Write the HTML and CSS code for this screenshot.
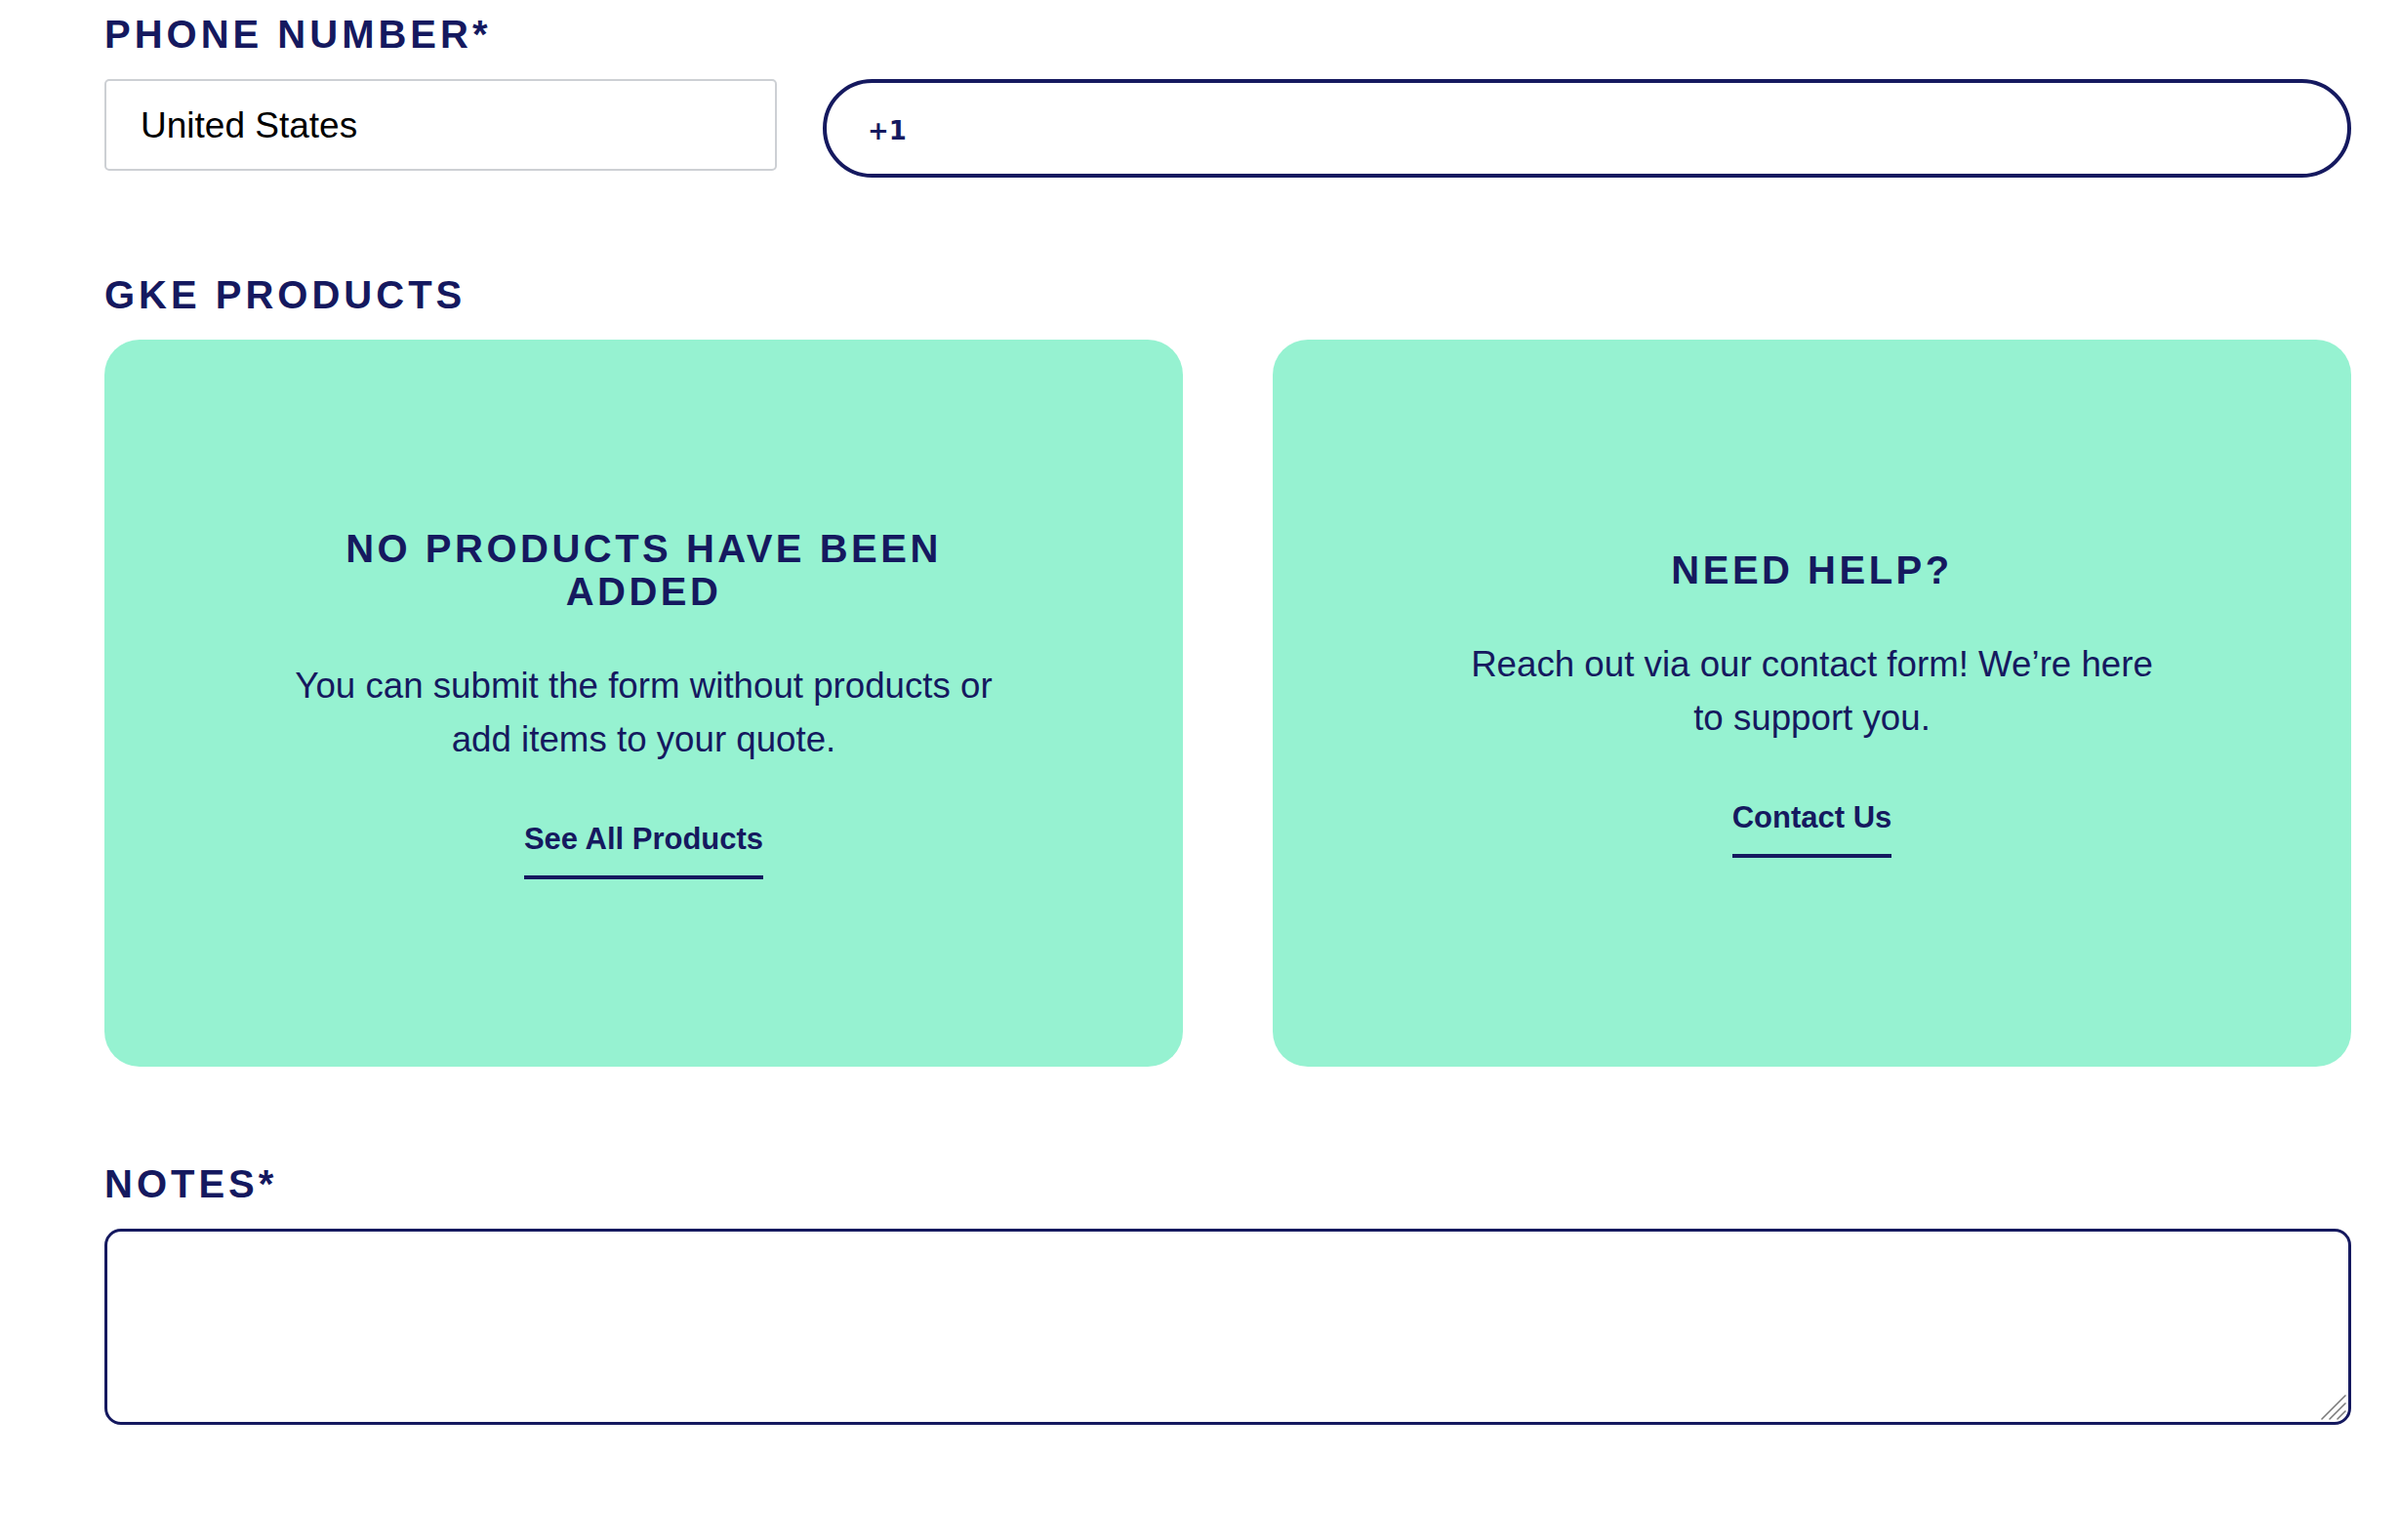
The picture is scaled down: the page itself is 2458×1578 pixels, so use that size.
FILE: index.html
```html
<!DOCTYPE html>
<html lang="en">
<head>
<meta charset="utf-8">
<title>Quote form</title>
<link rel="stylesheet" href="styles.css">
</head>
<body>
<form class="form">
  <div class="field">
    <label class="label" for="phone">PHONE NUMBER*</label>
    <div class="phone-row">
      <select class="country" aria-label="Country">
        <option>United States</option>
      </select>
      <div class="phone-input">
        <span class="prefix">+1</span>
        <input id="phone" class="phone-text" type="tel">
      </div>
    </div>
  </div>

  <div class="field">
    <div class="label">GKE PRODUCTS</div>
    <div class="cards">
      <div class="card">
        <h3 class="card-title">NO PRODUCTS HAVE BEEN<br>ADDED</h3>
        <p class="card-text">You can submit the form without products or<br>add items to your quote.</p>
        <a class="card-link" href="#">See All Products</a>
      </div>
      <div class="card">
        <h3 class="card-title">NEED HELP?</h3>
        <p class="card-text">Reach out via our contact form! We’re here<br>to support you.</p>
        <a class="card-link" href="#">Contact Us</a>
      </div>
    </div>
  </div>

  <div class="field">
    <label class="label" for="notes">NOTES*</label>
    <div class="notes-wrap">
      <textarea id="notes" class="notes"></textarea>
      <svg class="grip" width="26" height="26" viewBox="0 0 26 26" aria-hidden="true">
        <path d="M1 25 L25 1 M9 25 L25 9 M17 25 L25 17" stroke="#7a7a7a" stroke-width="1.6" stroke-linecap="round" fill="none"/>
      </svg>
    </div>
  </div>
</form>
</body>
</html>
```

FILE: styles.css
```css
* { box-sizing: border-box; }

body {
  margin: 0;
  background: #ffffff;
  font-family: "Liberation Sans", Arial, sans-serif;
  color: #15195f;
}

.form {
  width: 2409px;
  padding: 15px 0 0 107px;
}

.field {
  margin-bottom: 100px;
}

.label {
  display: block;
  font-weight: 700;
  font-size: 40px;
  line-height: 40px;
  letter-spacing: 4px;
  color: #15195f;
  margin-bottom: 26px;
}

.phone-row {
  display: grid;
  grid-template-columns: 689px 1fr;
  column-gap: 47px;
  align-items: start;
}

.country {
  -webkit-appearance: none;
  appearance: none;
  height: 94px;
  border: 2px solid #cdd0d4;
  border-radius: 5px;
  background: #ffffff;
  padding: 0 0 0 35px;
  font-family: "Liberation Sans", Arial, sans-serif;
  font-size: 37px;
  color: #000000;
}

.phone-input {
  height: 101px;
  border: 4px solid #15195f;
  border-radius: 60px;
  display: flex;
  align-items: center;
  padding-left: 42px;
}

.prefix {
  font-family: "DejaVu Sans", sans-serif;
  font-weight: 700;
  font-size: 26px;
  color: #15195f;
  padding-top: 4px;
}

.phone-text {
  flex: 1;
  border: 0;
  outline: none;
  height: 60px;
  margin-left: 12px;
  background: transparent;
  font-size: 30px;
}

.cards {
  display: grid;
  grid-template-columns: 1fr 1fr;
  column-gap: 92px;
}

.card {
  min-height: 745px;
  background: #96f2d1;
  border-radius: 36px;
  display: flex;
  flex-direction: column;
  align-items: center;
  justify-content: center;
  text-align: center;
  padding: 40px;
}

.card-title {
  margin: 0;
  font-weight: 700;
  font-size: 40px;
  line-height: 44px;
  letter-spacing: 3.5px;
  color: #15195f;
}

.card-text {
  margin: 47px 0 0;
  font-size: 36.7px;
  line-height: 55px;
  color: #15195f;
}

.card-link {
  margin-top: 56px;
  font-weight: 700;
  font-size: 31px;
  line-height: 37px;
  color: #15195f;
  text-decoration: none;
  padding-bottom: 19px;
  border-bottom: 4px solid #15195f;
}

.notes-wrap {
  position: relative;
  width: 2302px;
}

.notes {
  display: block;
  width: 2302px;
  height: 201px;
  border: 3px solid #15195f;
  border-radius: 17px;
  outline: none;
  resize: none;
  font-family: "Liberation Sans", Arial, sans-serif;
  font-size: 30px;
  padding: 16px;
}

.grip {
  position: absolute;
  right: 5px;
  bottom: 5px;
}
```
